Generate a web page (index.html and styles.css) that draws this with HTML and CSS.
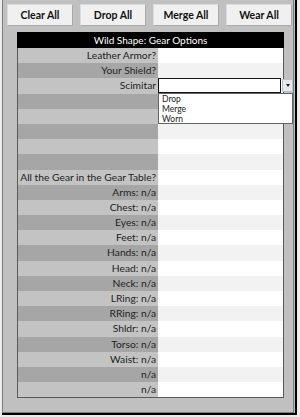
FILE: index.html
```html
<!DOCTYPE html>
<html>
<head>
<meta charset="utf-8">
<link rel="stylesheet" href="styles.css">
</head>
<body>
<div class="outer">
  <div class="frame">
    <div class="buttons">
      <button class="btn">Clear All</button>
      <button class="btn">Drop All</button>
      <button class="btn">Merge All</button>
      <button class="btn">Wear All</button>
    </div>
    <div class="sheet">
      <div class="head">Wild Shape: Gear Options</div>
      <div class="rows">
        <div class="lab l">Leather Armor?</div><div class="val w"></div>
        <div class="lab d">Your Shield?</div><div class="val g"></div>
        <div class="lab l">Scimitar</div>
        <div class="val w combo-cell">
          <div class="combo">
            <div class="combo-box"></div>
            <div class="combo-arrow"><span class="tri"></span></div>
          </div>
          <ul class="list">
            <li>Drop</li>
            <li>Merge</li>
            <li>Worn</li>
          </ul>
        </div>
        <div class="lab d"></div><div class="val g"></div>
        <div class="lab l"></div><div class="val w"></div>
        <div class="lab d"></div><div class="val g"></div>
        <div class="lab l"></div><div class="val w"></div>
        <div class="lab d"></div><div class="val g"></div>
        <div class="lab l">All the Gear in the Gear Table?</div><div class="val w"></div>
        <div class="lab d">Arms: n/a</div><div class="val g"></div>
        <div class="lab l">Chest: n/a</div><div class="val w"></div>
        <div class="lab d">Eyes: n/a</div><div class="val g"></div>
        <div class="lab l">Feet: n/a</div><div class="val w"></div>
        <div class="lab d">Hands: n/a</div><div class="val g"></div>
        <div class="lab l">Head: n/a</div><div class="val w"></div>
        <div class="lab d">Neck: n/a</div><div class="val g"></div>
        <div class="lab l">LRing: n/a</div><div class="val w"></div>
        <div class="lab d">RRing: n/a</div><div class="val g"></div>
        <div class="lab l">Shldr: n/a</div><div class="val w"></div>
        <div class="lab d">Torso: n/a</div><div class="val g"></div>
        <div class="lab l">Waist: n/a</div><div class="val w"></div>
        <div class="lab d">n/a</div><div class="val g"></div>
        <div class="lab l">n/a</div><div class="val w"></div>
      </div>
    </div>
  </div>
</div>
</body>
</html>
```
FILE: styles.css
```css
html, body {
  margin: 0;
  padding: 0;
}
body {
  width: 300px;
  height: 417px;
  background: #ececec;
  font-family: "Lato", "Open Sans", sans-serif;
  overflow: hidden;
}
.outer {
  margin-left: 2px;
  width: 295px;
  height: 415px;
  box-sizing: border-box;
  border-right: 2px solid #000;
  border-bottom: 2px solid #000;
  padding-right: 1px;
  background: #c0c0c0;
}
.frame {
  width: 292px;
  height: 413px;
  box-sizing: border-box;
  border-left: 1px solid #7c7c7c;
  border-right: 1px solid #7c7c7c;
  border-bottom: 1px solid #7c7c7c;
  background: #c0c0c0;
  padding-top: 4px;
}
.buttons {
  display: flex;
  gap: 7px;
  margin-left: 4px;
}
.btn {
  width: 66px;
  height: 22px;
  margin: 0;
  padding: 0;
  box-sizing: border-box;
  background: #f0f0f0;
  border: 1px solid #dcdcdc;
  border-right-color: #a9a9a9;
  border-bottom-color: #a9a9a9;
  font-family: "Lato", "Open Sans", sans-serif;
  font-weight: bold;
  font-size: 10.5px;
  color: #111;
}
.sheet {
  margin-top: 6px;
  margin-left: 14px;
  width: 267px;
}
.head {
  height: 16px;
  background: #000;
  color: #fff;
  font-size: 10px;
  line-height: 16px;
  text-align: center;
}
.rows {
  display: grid;
  grid-template-columns: 140px 125px;
  grid-template-rows: repeat(23, 15.2px);
  border-left: 1px solid #5a5a5a;
  border-right: 1px solid #5a5a5a;
  border-bottom: 1px solid #5a5a5a;
}
.lab {
  font-size: 10.25px;
  line-height: 15px;
  color: #222;
  text-align: right;
  padding-right: 2px;
  white-space: nowrap;
}
.lab.l { background: #c3c3c3; }
.lab.d { background: #a6a6a6; }
.val.w { background: #ffffff; }
.val.g { background: #f2f2f2; }
.combo-cell {
  position: relative;
}
.combo {
  position: absolute;
  left: 0;
  top: 0;
  width: 135px;
  height: 15px;
  display: flex;
  z-index: 2;
}
.combo-box {
  width: 123px;
  height: 15px;
  box-sizing: border-box;
  border: 1.5px solid #111;
  background: #fff;
}
.combo-arrow {
  width: 11px;
  height: 13px;
  margin-top: 1px;
  margin-left: 1px;
  box-sizing: border-box;
  border: 1px solid #b4c2d2;
  background: #e4e9f0;
  display: flex;
  align-items: center;
  justify-content: center;
}
.tri {
  width: 0;
  height: 0;
  border-left: 2.5px solid transparent;
  border-right: 2.5px solid transparent;
  border-top: 3px solid #222;
}
.list {
  position: absolute;
  left: 0;
  top: 15px;
  width: 135px;
  height: 31px;
  box-sizing: border-box;
  margin: 0;
  padding: 1px 0 0 3px;
  list-style: none;
  background: #fff;
  border: 1px solid #646464;
  z-index: 3;
}
.list li {
  font-size: 8.5px;
  line-height: 9.7px;
  color: #1a1a1a;
}
```
